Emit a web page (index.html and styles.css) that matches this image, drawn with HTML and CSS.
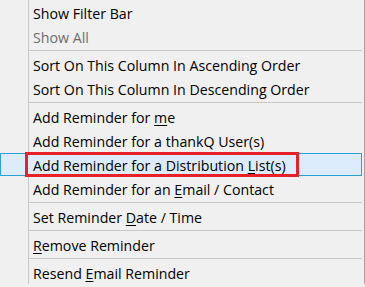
FILE: index.html
```html
<!DOCTYPE html>
<html>
<head>
<meta charset="utf-8">
<link rel="stylesheet" href="styles.css">
</head>
<body>
<div class="menu">
  <div class="item">Show Filter Bar</div>
  <div class="item disabled">Show All</div>
  <div class="sep"></div>
  <div class="item">Sort On This Column In Ascending Order</div>
  <div class="item">Sort On This Column In Descending Order</div>
  <div class="sep"></div>
  <div class="item">Add Reminder for <u>m</u>e</div>
  <div class="item">Add Reminder for a thankQ User(s)</div>
  <div class="item hot">Add Reminder for a Distribution <u>L</u>ist(s)</div>
  <div class="item">Add Reminder for an <u>E</u>mail / Contact</div>
  <div class="sep"></div>
  <div class="item">Set Reminder <u>D</u>ate / Time</div>
  <div class="sep"></div>
  <div class="item"><u>R</u>emove Reminder</div>
  <div class="sep"></div>
  <div class="item">Resend <u>E</u>mail Reminder</div>
  <div class="callout"></div>
</div>
</body>
</html>
```
FILE: styles.css
```css
html, body {
  margin: 0;
  padding: 0;
  background: #f0f0f0;
}
body {
  width: 365px;
  height: 287px;
  overflow: hidden;
  font-family: "Open Sans", "Noto Sans", sans-serif;
  font-size: 14.2px;
  color: #000;
}
.menu {
  position: relative;
  width: 364px;
  height: 284px;
  border-right: 1px solid #a0a0a0;
  display: flex;
  flex-direction: column;
  background: linear-gradient(to right, transparent 28px, #c8c8c8 28px, #c8c8c8 29px, transparent 29px) no-repeat;
}
.item {
  box-sizing: border-box;
  height: 24px;
  padding-top: 2px;
  line-height: 24px;
  padding-left: 33px;
  margin-right: 2px;
  white-space: nowrap;
  flex: none;
}
.item u {
  text-decoration-thickness: 1px;
  text-underline-offset: 2px;
}
.disabled {
  color: #6d6d6d;
}
.hot {
  height: 23px;
  margin-top: 1px;
  padding-top: 1px;
  line-height: 22px;
  padding-left: 32px;
  background: #dcecfc;
  border: 1px solid #26a0da;
}
.sep {
  flex: none;
  height: 1px;
  margin: 2px 2px 1px 28px;
  background: #c8c8c8;
}
.callout {
  position: absolute;
  left: 25px;
  top: 152px;
  width: 274px;
  height: 25px;
  box-sizing: border-box;
  border: 3px solid #e8202a;
}
```
